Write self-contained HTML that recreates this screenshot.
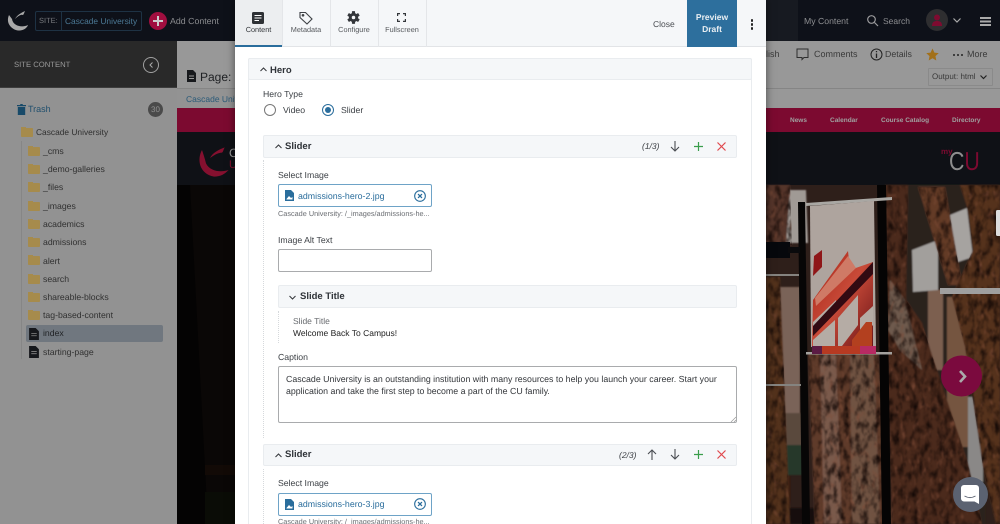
<!DOCTYPE html>
<html><head><meta charset="utf-8"><style>
*{box-sizing:border-box}
html,body{margin:0;padding:0;width:1000px;height:524px;overflow:hidden}
body{background:#929292;font-family:"Liberation Sans",sans-serif;font-size:9px;color:#333;text-rendering:geometricPrecision}
#root{position:relative;width:1000px;height:524px;overflow:hidden}
.a{position:absolute;white-space:nowrap}
.t{line-height:12px}
.side{color:#303030;font-size:8.700px;left:43px}
.fold{position:absolute;left:28px;width:12px;height:9px;background:#a68b4c;border-radius:1px}
.fold:before{content:"";position:absolute;left:0;top:-1px;width:5px;height:2px;background:#a68b4c}
.vbar{position:absolute;background:#f5f7f9;border:1px solid #e9ecef;border-radius:2px}
.h{font-weight:bold;font-size:9.500px;color:#2f3338}
.l{font-size:8.700px;color:#3c4045}
.tab{top:24px;text-align:center;font-size:7.300px;line-height:11px;color:#55585c}
.nav{top:114.500px;color:#a0a0a0;font-size:6.500px;font-weight:bold}
.pick{position:absolute;left:278px;width:154px;height:23px;border:1px solid #6ea3c7;border-radius:2px;background:#fff}
.dots{position:absolute;width:0;border-left:1px dotted #d6d9dc}
svg{position:absolute;overflow:visible}
</style></head><body><div id="root">

<!-- top bar -->
<div class="a" style="left:0;top:0;width:1000px;height:41px;background:#0e1119"></div>
<svg style="left:0;top:0" width="40" height="40" viewBox="0 0 40 40" fill="#a9a9a9"><path d="M9 15C5 24 13 31 20 30.500C24 30 27 28 28 25C22 28 13 26 12 19Z"/><path d="M15 19C17 15 21 13 25 11C24 13 24 14 23 15C21 14 18 16 15 19Z"/></svg>
<div class="a" style="left:35px;top:11px;width:107px;height:20px;border:1px solid #1e3244;border-radius:2px"></div>
<div class="a" style="left:61px;top:11px;width:1px;height:20px;background:#1e3244"></div>
<div class="a t" style="left:39px;top:15px;color:#77797d;font-size:7.500px">SITE:</div>
<div class="a t" style="left:65px;top:15px;color:#4b7894;font-size:8.400px">Cascade University</div>
<div class="a" style="left:149px;top:12px;width:18px;height:18px;border-radius:50%;background:#a00e3f"></div>
<div class="a" style="left:153px;top:20px;width:10px;height:2px;background:#ccc"></div>
<div class="a" style="left:157px;top:16px;width:2px;height:10px;background:#ccc"></div>
<div class="a t" style="left:170px;top:15px;color:#8b8c8f;font-size:8.800px">Add Content</div>
<div class="a" style="left:766px;top:0;width:32px;height:41px;background:#171a21"></div>
<div class="a t" style="left:804px;top:15px;color:#8d8e91;font-size:8.700px">My Content</div>
<svg style="left:867px;top:15px" width="12" height="12" viewBox="0 0 12 12" fill="none" stroke="#9a9a9c" stroke-width="1.200"><circle cx="4.500" cy="4.500" r="3.800"/><path d="M7.500 7.500L11 11"/></svg>
<div class="a t" style="left:883px;top:15px;color:#8d8e91;font-size:8.500px">Search</div>
<div class="a" style="left:926px;top:9px;width:22px;height:22px;border-radius:50%;background:#2e2e30"></div>
<svg style="left:931px;top:14px" width="12" height="12" viewBox="0 0 12 12"><circle cx="6" cy="3.500" r="3" fill="#7e0b30"/><path d="M1 12C1 8 3 7 6 7S11 8 11 12Z" fill="#7e0b30"/></svg>
<svg style="left:953px;top:18px" width="8" height="5" viewBox="0 0 8 5" fill="none" stroke="#aaa" stroke-width="1.200"><path d="M.5.500L4 4L7.500.500"/></svg>
<div class="a" style="left:980px;top:17px;width:11px;height:1.500px;background:#aaa;box-shadow:0 3.500px 0 #aaa,0 7px 0 #aaa"></div>

<!-- sidebar -->
<div class="a" style="left:0;top:41px;width:177px;height:47px;background:#292929;border-bottom:1px solid #3d3d3d"></div>
<div class="a" style="left:0;top:88px;width:177px;height:436px;background:#929292"></div>
<div class="a t" style="left:14px;top:59px;color:#9a9a9a;font-size:7.700px">SITE CONTENT</div>
<div class="a" style="left:143px;top:57px;width:16px;height:16px;border:1px solid #a0a0a0;border-radius:50%"></div>
<svg style="left:149px;top:62px" width="4" height="6" viewBox="0 0 4 6" fill="none" stroke="#aaa" stroke-width="1"><path d="M3.500.500L1 3L3.500 5.500"/></svg>
<svg style="left:17px;top:104px" width="9" height="11" viewBox="0 0 9 11"><path d="M0 1H3L3.500 0H5.500L6 1H9V2.200H0ZM.8 3H8.200V11H.8Z" fill="#184a69"/></svg>
<div class="a t" style="left:28px;top:103px;color:#204f6d;font-size:9px">Trash</div>
<div class="a" style="left:148px;top:102px;width:15px;height:15px;border-radius:50%;background:#4a4a4a;color:#929292;font-size:8px;text-align:center;line-height:15px">30</div>
<div class="fold" style="left:21px;top:128px"></div>
<div class="a t side" style="left:36px;top:126px;font-size:8.400px">Cascade University</div>
<div class="a" style="left:21px;top:141px;width:1px;height:218px;background:#868686"></div>
<div class="fold" style="top:147px"></div><div class="a t side" style="top:145px">_cms</div>
<div class="fold" style="top:165px"></div><div class="a t side" style="top:163px">_demo-galleries</div>
<div class="fold" style="top:183px"></div><div class="a t side" style="top:181px">_files</div>
<div class="fold" style="top:202px"></div><div class="a t side" style="top:200px">_images</div>
<div class="fold" style="top:220px"></div><div class="a t side" style="top:218px">academics</div>
<div class="fold" style="top:238px"></div><div class="a t side" style="top:236px">admissions</div>
<div class="fold" style="top:256px"></div><div class="a t side" style="top:255px">alert</div>
<div class="fold" style="top:275px"></div><div class="a t side" style="top:273px">search</div>
<div class="fold" style="top:293px"></div><div class="a t side" style="top:291px">shareable-blocks</div>
<div class="fold" style="top:311px"></div><div class="a t side" style="top:309px">tag-based-content</div>
<div class="a" style="left:26px;top:325px;width:137px;height:17px;background:#70777f;border-radius:2px"></div>
<svg style="left:29px;top:328px" width="10" height="12" viewBox="0 0 9 11"><path d="M0 0H6L9 3V11H0Z" fill="#16181c"/><path d="M2 5H7M2 7H7" stroke="#777" stroke-width=".8"/></svg>
<div class="a t side" style="top:327px;color:#1f2124">index</div>
<svg style="left:29px;top:346px" width="10" height="12" viewBox="0 0 9 11"><path d="M0 0H6L9 3V11H0Z" fill="#16181c"/><path d="M2 5H7M2 7H7" stroke="#888" stroke-width=".8"/></svg>
<div class="a t side" style="top:346px">starting-page</div>

<!-- center page strip -->
<div class="a" style="left:177px;top:41px;width:58px;height:50px;background:#989898"></div>
<div class="a" style="left:177px;top:88px;width:58px;height:20px;background:#939393;border-top:1px solid #858585"></div>
<svg style="left:187px;top:70px" width="9" height="12" viewBox="0 0 9 12"><path d="M0 0H6L9 3V12H0Z" fill="#17191c"/><path d="M2 6H7M2 8.500H7" stroke="#999" stroke-width=".9"/></svg>
<div class="a" style="left:200px;top:69px;color:#1f2124;font-size:12px;line-height:16px">Page:</div>
<div class="a t" style="left:186px;top:93px;color:#2b5a78;font-size:8.500px;width:49px;overflow:hidden">Cascade University</div>
<div class="a" style="left:177px;top:108px;width:823px;height:24px;background:#7c0a30"></div>
<div class="a" style="left:177px;top:132px;width:823px;height:53px;background:#0f1116"></div>
<svg style="left:198px;top:146px" width="32" height="32" viewBox="0 0 24 24"><path d="M3 3C-1 10 1 21 12 23C17 23 20 21 23 18C17 20 9 19 6 13C5 9 4 6 3 3Z" fill="#85102f"/><path d="M9 9C11 5 15 3 20 1C19 3 19 4 18 5C15 5 12 7 9 9Z" fill="#85102f"/></svg>
<div class="a t" style="left:229px;top:147px;color:#999;font-size:12px">C</div>
<div class="a t" style="left:229px;top:159px;color:#85102f;font-size:11px">U</div>

<!-- right toolbar -->
<div class="a" style="left:766px;top:41px;width:234px;height:67px;background:#989898"></div>
<div class="a" style="left:766px;top:88px;width:234px;height:1px;background:#858585"></div>
<div class="a t" style="left:766px;top:48px;color:#3a3a3a;font-size:9px">lish</div>
<svg style="left:796px;top:48px" width="13" height="13" viewBox="0 0 13 13" fill="none" stroke="#2e2e2e" stroke-width="1"><path d="M1 1H12V9.500H8L6 11.500V9.500H1Z"/></svg>
<div class="a t" style="left:814px;top:48px;color:#3a3a3a;font-size:9px">Comments</div>
<svg style="left:870px;top:48px" width="13" height="13" viewBox="0 0 13 13" fill="none" stroke="#222" stroke-width="1"><circle cx="6.500" cy="6.500" r="5.500"/><path d="M6.500 5.500V10M6.500 3V4.300" stroke-width="1.300"/></svg>
<div class="a t" style="left:885px;top:48px;color:#3a3a3a;font-size:8.800px">Details</div>
<svg style="left:926px;top:48px" width="13" height="13" viewBox="0 0 24 24"><path d="M12 1L15.500 8.500L23.500 9.500L17.500 15L19 23L12 19L5 23L6.500 15L.5 9.500L8.500 8.500Z" fill="#a2701a"/></svg>
<div class="a" style="left:953px;top:53.500px;width:2px;height:2px;border-radius:50%;background:#222;box-shadow:4px 0 0 #222,8px 0 0 #222"></div>
<div class="a t" style="left:967px;top:48px;color:#3a3a3a;font-size:9px">More</div>
<div class="a" style="left:928px;top:68px;width:65px;height:18px;border:1px solid #8a8a8a;border-radius:1px"></div>
<div class="a t" style="left:932px;top:71px;color:#3a3a3a;font-size:8px">Output: html</div>
<svg style="left:980px;top:75px" width="7" height="5" viewBox="0 0 7 5" fill="none" stroke="#222" stroke-width="1.200"><path d="M.5.500L3.500 3.500L6.500.500"/></svg>
<div class="a t nav" style="left:790px">News</div>
<div class="a t nav" style="left:830px">Calendar</div>
<div class="a t nav" style="left:881px">Course Catalog</div>
<div class="a t nav" style="left:952px">Directory</div>
<div class="a" style="left:941px;top:147px;color:#7c0a30;font-size:8px;line-height:10px;font-weight:bold">my</div>
<div class="a" style="left:949px;top:146px;color:#8e8e8e;font-size:26px;line-height:30px;transform:scaleX(.82);transform-origin:left">C<span style="color:#7c0a30">U</span></div>

<!-- photo -->
<svg style="left:177px;top:185px;width:823px;height:339px" width="823" height="339" viewBox="177 185 823 339">
<defs>
<filter id="bark" x="0" y="0" width="100%" height="100%" color-interpolation-filters="sRGB"><feTurbulence type="fractalNoise" baseFrequency=".16 .09" numOctaves="3" seed="4"/><feColorMatrix values="0 0 0 0 .07 0 0 0 0 .03 0 0 0 0 .02 2.200 0 0 0 -.950"/><feGaussianBlur stdDeviation=".5"/></filter>
<filter id="bark2" x="0" y="0" width="100%" height="100%" color-interpolation-filters="sRGB"><feTurbulence type="fractalNoise" baseFrequency=".18 .1" numOctaves="2" seed="11"/><feColorMatrix values="0 0 0 0 .5 0 0 0 0 .3 0 0 0 0 .22 0 2.200 0 0 -1.250"/><feGaussianBlur stdDeviation=".5"/></filter>
<filter id="soft" x="-2%" y="-2%" width="104%" height="104%"><feGaussianBlur stdDeviation=".8"/></filter>
<linearGradient id="ban" x1="0" y1="0" x2="1" y2="1"><stop offset="0" stop-color="#a52216"/><stop offset=".5" stop-color="#c84a38"/><stop offset="1" stop-color="#6a1418"/></linearGradient>
<clipPath id="tr"><path d="M808 353H878L892 524H815Z M885 185H908L906 300L922 323L932 355L968 463L982 524H892L888 380Z M918 187H945L962 285H948Z M960 185H1000V524H996L983 467L965 347L952 297L973 250L968 210Z M766 277H780L790 524H766Z M766 185H790L792 245H766Z"/></clipPath>
</defs>
<rect x="177" y="185" width="58" height="339" fill="#0a0706"/>
<path d="M190 185L208 524H177V185Z" fill="#040303"/>
<rect x="205" y="465" width="30" height="10" fill="#120a06"/>
<rect x="205" y="492" width="30" height="32" fill="#0a0c06"/>
<rect x="766" y="185" width="234" height="339" fill="#2e1f1a"/>
<g filter="url(#soft)">
<!-- building -->
<rect x="905" y="185" width="80" height="339" fill="#2c201b"/>
<rect x="928" y="290" width="15" height="80" fill="#7b5e50"/>
<rect x="947" y="297" width="21" height="150" fill="#75543f"/>
<rect x="968" y="397" width="15" height="85" fill="#8a8887"/>
<path d="M912 250L938 240L938 290L913 292Z" fill="#a29f9c"/>
<path d="M950 215L967 208L973 257L955 263Z" fill="#a6a3a0"/>
<!-- left bg -->
<path d="M780 287H800V413H783Z" fill="#7a6358"/>
<path d="M782 413H802V445H782Z" fill="#5a483c"/>
<rect x="782" y="445" width="20" height="30" fill="#28372a"/>
<path d="M766 185H790L792 245H766Z" fill="#54352a"/>
<path d="M790 190H806L808 243H786Z" fill="#a09a95"/>
<rect x="766" y="476" width="24" height="32" fill="#3a1a10"/>
<rect x="766" y="476" width="22" height="3" fill="#8a8a86"/>
<rect x="766" y="508" width="60" height="16" fill="#15100e"/>
<!-- trunks -->
<path d="M766 277H780L790 524H766Z" fill="#53301f"/>
<path d="M808 353H878L892 524H815Z" fill="#5f3b2c"/>
<path d="M820 355H836L842 524H824Z" fill="#7a5a4c"/>
<path d="M850 355H874L880 524H852Z" fill="#705243"/>
<path d="M885 185H908L906 300L922 323L932 355L968 463L982 524H892L888 380Z" fill="#4c2a1d"/>
<path d="M890 280L905 300L922 370L900 350L888 330Z" fill="#6e5a4e"/>
<path d="M918 187H945L962 285H948Z" fill="#643a25"/>
<path d="M960 185H1000V524H996L983 467L965 347L952 297L973 250L968 210Z" fill="#55301f"/>
</g>
<g clip-path="url(#tr)"><rect x="766" y="185" width="234" height="339" filter="url(#bark2)"/><rect x="766" y="185" width="234" height="339" filter="url(#bark)"/></g>
<g>
<!-- poles -->
<path d="M798 202H805L810 524H802Z" fill="#070606"/>
<path d="M877 185H886L891 524H882Z" fill="#050404"/>
<rect x="766" y="242" width="24" height="16" fill="#06080c"/>
<rect x="788" y="247" width="12" height="6" fill="#0a0a0c"/>
<!-- bars -->
<path d="M806 203L892 197V200L806 206Z" fill="#a9a7a3"/>
<rect x="806" y="352" width="86" height="2.500" fill="#a3a19e"/>
<rect x="766" y="274" width="33" height="2" fill="#85837f"/>
<rect x="766" y="384" width="35" height="2" fill="#85837f"/>
<rect x="940" y="288" width="60" height="6" fill="#9f9f9f"/>
<!-- banner -->
<path d="M810 206L874 201L876 347H811Z" fill="#aea49e"/>
<path d="M814 256L822 250V267L813 276Z" fill="#8f1618"/>
<path d="M813 300L848 251L850 270L873 262L873 346L812 346Z" fill="url(#ban)"/>
<path d="M813 322L836 300V306L813 328Z M813 340L835 320V346H813Z M838 346V318L858 295V325L842 346Z M860 318L873 306V325L860 338Z" fill="#b5aca5"/>
<path d="M813 326L873 262V274L813 336Z" fill="#320a12"/>
<path d="M815 298L848 256L856 268L816 306Z" fill="#cf7a66"/>
<path d="M852 340L866 322L872 322V346H852Z" fill="#b3401f"/>
<rect x="812" y="346" width="64" height="8" fill="#b73a22"/>
<rect x="860" y="346" width="16" height="8" fill="#b82a63"/>
<rect x="812" y="346" width="10" height="8" fill="#5b1b44"/>
</g>
<!-- next button -->
<circle cx="961.500" cy="376" r="20.500" fill="#7b0a3e"/>
<path d="M960 371L965 376.500L960 382" fill="none" stroke="#aaa" stroke-width="2.600"/>
<rect x="996" y="210" width="5" height="26" rx="1.500" fill="#ddd"/>
</svg>
<div class="a" style="left:953px;top:477px;width:35px;height:35px;border-radius:50%;background:#5b6271"></div>
<svg style="left:961px;top:485px" width="18" height="19" viewBox="0 0 18 19"><path d="M3 0H15A3 3 0 0 1 18 3V19L13.500 16.500H3A3 3 0 0 1 0 13.500V3A3 3 0 0 1 3 0Z" fill="#fff"/><path d="M3.500 11C7 13 11 13 14.500 11" fill="none" stroke="#5b6271" stroke-width="1"/></svg>

<!-- modal -->
<div class="a" style="left:235px;top:0;width:531px;height:524px;background:#fff;box-shadow:0 0 8px rgba(0,0,0,.5)"></div>
<div class="a" style="left:235px;top:0;width:531px;height:47px;background:#f5f7f9;border-bottom:1px solid #e2e4e7"></div>
<div class="a" style="left:235px;top:0;width:47px;height:47px;background:#eceef0;border-bottom:2px solid #2a6d9c"></div>
<div class="a" style="left:282px;top:0;width:1px;height:47px;background:#e4e6e9"></div>
<div class="a" style="left:330px;top:0;width:1px;height:47px;background:#e4e6e9"></div>
<div class="a" style="left:378px;top:0;width:1px;height:47px;background:#e4e6e9"></div>
<div class="a" style="left:426px;top:0;width:1px;height:47px;background:#e4e6e9"></div>
<svg style="left:252px;top:12px" width="12" height="12" viewBox="0 0 12 12"><rect width="12" height="12" rx="1.500" fill="#2e3135"/><path d="M2.500 3.500H9.500M2.500 6H9.500M2.500 8.500H7" stroke="#fff" stroke-width="1.100"/></svg>
<div class="a tab" style="left:235px;width:47px;color:#33363a">Content</div>
<svg style="left:299px;top:11px" width="14" height="14" viewBox="0 0 14 14" fill="none" stroke="#3e4145" stroke-width="1.100"><path d="M1 1.500H6.500L13 8L8 13L1 6.500Z"/><circle cx="4" cy="4.300" r=".8" fill="#3e4145"/></svg>
<div class="a tab" style="left:282px;width:48px">Metadata</div>
<svg style="left:347px;top:11px" width="13" height="13" viewBox="-7 -7 14 14"><g fill="#33363a"><rect x="-1.700" y="-6.800" width="3.400" height="13.600" rx=".6"/><rect x="-1.700" y="-6.800" width="3.400" height="13.600" rx=".6" transform="rotate(60)"/><rect x="-1.700" y="-6.800" width="3.400" height="13.600" rx=".6" transform="rotate(120)"/><circle r="5"/></g><circle r="1.900" fill="#f5f7f9"/></svg>
<div class="a tab" style="left:330px;width:48px">Configure</div>
<svg style="left:397px;top:13px" width="9" height="9" viewBox="0 0 9 9" fill="none" stroke="#33363a" stroke-width="1.200"><path d="M.6 3V.6H3M6 .6H8.400V3M8.400 6V8.400H6M3 8.400H.6V6"/></svg>
<div class="a tab" style="left:378px;width:48px">Fullscreen</div>
<div class="a t" style="left:653px;top:18px;color:#4a4d52;font-size:8.500px">Close</div>
<div class="a" style="left:687px;top:0;width:50px;height:47px;background:#2d6f9d;color:#e8eef2;text-align:center;font-weight:bold;font-size:8.500px;line-height:12px;padding-top:11px">Preview<br>Draft</div>
<div class="a" style="left:750.500px;top:19px;width:2.500px;height:2.500px;border-radius:50%;background:#222;box-shadow:0 4px 0 #222,0 8px 0 #222"></div>

<!-- hero -->
<div class="a" style="left:248px;top:58px;width:504px;height:480px;border:1px solid #e9ecef;border-radius:2px"></div>
<div class="vbar" style="left:248px;top:58px;width:504px;height:22px"></div>
<svg style="left:260px;top:67px" width="7" height="5" viewBox="0 0 7 5" fill="none" stroke="#33363a" stroke-width="1"><path d="M.5 4L3.500 1L6.500 4"/></svg>
<div class="a t h" style="left:270px;top:65px">Hero</div>
<div class="a t l" style="left:263px;top:88px">Hero Type</div>
<div class="a" style="left:264px;top:104px;width:12px;height:12px;border:1px solid #777;border-radius:50%;background:#fff"></div>
<div class="a t l" style="left:283px;top:104px">Video</div>
<div class="a" style="left:322px;top:104px;width:12px;height:12px;border:1px solid #2a6d9c;border-radius:50%;background:#fff"></div>
<div class="a" style="left:325px;top:107px;width:6px;height:6px;border-radius:50%;background:#2a6d9c"></div>
<div class="a t l" style="left:341px;top:104px">Slider</div>

<!-- slider 1 -->
<div class="vbar" style="left:263px;top:135px;width:474px;height:23px"></div>
<svg style="left:275px;top:144px" width="7" height="5" viewBox="0 0 7 5" fill="none" stroke="#33363a" stroke-width="1"><path d="M.5 4L3.500 1L6.500 4"/></svg>
<div class="a t h" style="left:285px;top:141px">Slider</div>
<div class="a t" style="left:642px;top:140px;font-style:italic;font-size:8.500px;color:#3c4045">(1/3)</div>
<svg style="left:670px;top:141px" width="10" height="11" viewBox="0 0 10 11" fill="none" stroke="#4a4d52" stroke-width="1.100"><path d="M5 0V10M1 6L5 10L9 6"/></svg>
<svg style="left:694px;top:142px" width="9" height="9" viewBox="0 0 9 9" stroke="#3a9d4c" stroke-width="1.200"><path d="M4.500 0V9M0 4.500H9"/></svg>
<svg style="left:717px;top:142px" width="9" height="9" viewBox="0 0 9 9" stroke="#e0474c" stroke-width="1.200"><path d="M.5.500L8.500 8.500M8.500.500L.5 8.500"/></svg>
<div class="dots" style="left:263px;top:160px;height:278px"></div>
<div class="a t l" style="left:278px;top:169px">Select Image</div>
<div class="pick" style="top:184px"></div>
<svg style="left:285px;top:190px" width="9" height="11" viewBox="0 0 9 11"><path d="M0 0H6L9 3V11H0Z" fill="#2a6d9c"/><path d="M1.500 9L4 6L6 8L7.500 7V9.500H1.500Z" fill="#fff"/></svg>
<div class="a t" style="left:298px;top:190px;color:#2a6d9c;font-size:8.800px">admissions-hero-2.jpg</div>
<svg style="left:414px;top:190px" width="12" height="12" viewBox="0 0 11 11" fill="none" stroke="#2a6d9c"><circle cx="5.500" cy="5.500" r="4.900" stroke-width="1"/><path d="M3.700 3.700L7.300 7.300M7.300 3.700L3.700 7.300" stroke-width="1.200"/></svg>
<div class="a" style="left:278px;top:208px;color:#6a6d72;font-size:7.300px;line-height:11px">Cascade University: /_images/admissions-he...</div>
<div class="a t l" style="left:278px;top:234px">Image Alt Text</div>
<div class="a" style="left:278px;top:249px;width:154px;height:23px;border:1px solid #a9abad;border-bottom-width:1.500px;border-radius:2px;background:#fff"></div>
<div class="vbar" style="left:278px;top:285px;width:459px;height:23px"></div>
<svg style="left:289px;top:295px" width="7" height="5" viewBox="0 0 7 5" fill="none" stroke="#33363a" stroke-width="1"><path d="M.5 1L3.500 4L6.500 1"/></svg>
<div class="a t h" style="left:300px;top:291px">Slide Title</div>
<div class="dots" style="left:278px;top:311px;height:32px"></div>
<div class="a t" style="left:293px;top:315px;color:#66696d;font-size:8.500px">Slide Title</div>
<div class="a t" style="left:293px;top:327px;color:#222;font-size:8.500px">Welcome Back To Campus!</div>
<div class="a t l" style="left:278px;top:351px">Caption</div>
<div class="a" style="left:278px;top:366px;width:459px;height:57px;border:1px solid #a9abad;border-bottom-width:1.500px;border-radius:2px;background:#fff"></div>
<div class="a" style="left:286px;top:374px;width:440px;font-size:8.800px;line-height:11.500px;color:#33363a;white-space:normal">Cascade University is an outstanding institution with many resources to help you launch your career. Start your application and take the first step to become a part of the CU family.</div>
<svg style="left:731px;top:417px" width="5" height="5" viewBox="0 0 5 5" stroke="#999" stroke-width=".7"><path d="M0 5L5 0M3 5L5 3"/></svg>

<!-- slider 2 -->
<div class="vbar" style="left:263px;top:444px;width:474px;height:22px"></div>
<svg style="left:275px;top:453px" width="7" height="5" viewBox="0 0 7 5" fill="none" stroke="#33363a" stroke-width="1"><path d="M.5 4L3.500 1L6.500 4"/></svg>
<div class="a t h" style="left:285px;top:449px">Slider</div>
<div class="a t" style="left:619px;top:449px;font-style:italic;font-size:8.500px;color:#3c4045">(2/3)</div>
<svg style="left:647px;top:449px" width="10" height="11" viewBox="0 0 10 11" fill="none" stroke="#4a4d52" stroke-width="1.100"><path d="M5 11V1M1 5L5 1L9 5"/></svg>
<svg style="left:670px;top:449px" width="10" height="11" viewBox="0 0 10 11" fill="none" stroke="#4a4d52" stroke-width="1.100"><path d="M5 0V10M1 6L5 10L9 6"/></svg>
<svg style="left:694px;top:450px" width="9" height="9" viewBox="0 0 9 9" stroke="#3a9d4c" stroke-width="1.200"><path d="M4.500 0V9M0 4.500H9"/></svg>
<svg style="left:717px;top:450px" width="9" height="9" viewBox="0 0 9 9" stroke="#e0474c" stroke-width="1.200"><path d="M.5.500L8.500 8.500M8.500.500L.5 8.500"/></svg>
<div class="dots" style="left:263px;top:469px;height:55px"></div>
<div class="a t l" style="left:278px;top:477px">Select Image</div>
<div class="pick" style="top:493px"></div>
<svg style="left:285px;top:499px" width="9" height="11" viewBox="0 0 9 11"><path d="M0 0H6L9 3V11H0Z" fill="#2a6d9c"/><path d="M1.500 9L4 6L6 8L7.500 7V9.500H1.500Z" fill="#fff"/></svg>
<div class="a t" style="left:298px;top:498px;color:#2a6d9c;font-size:8.800px">admissions-hero-3.jpg</div>
<svg style="left:414px;top:498px" width="12" height="12" viewBox="0 0 11 11" fill="none" stroke="#2a6d9c"><circle cx="5.500" cy="5.500" r="4.900" stroke-width="1"/><path d="M3.700 3.700L7.300 7.300M7.300 3.700L3.700 7.300" stroke-width="1.200"/></svg>
<div class="a" style="left:278px;top:516px;color:#6a6d72;font-size:7.300px;line-height:11px">Cascade University: /_images/admissions-he...</div>
</div></body></html>
